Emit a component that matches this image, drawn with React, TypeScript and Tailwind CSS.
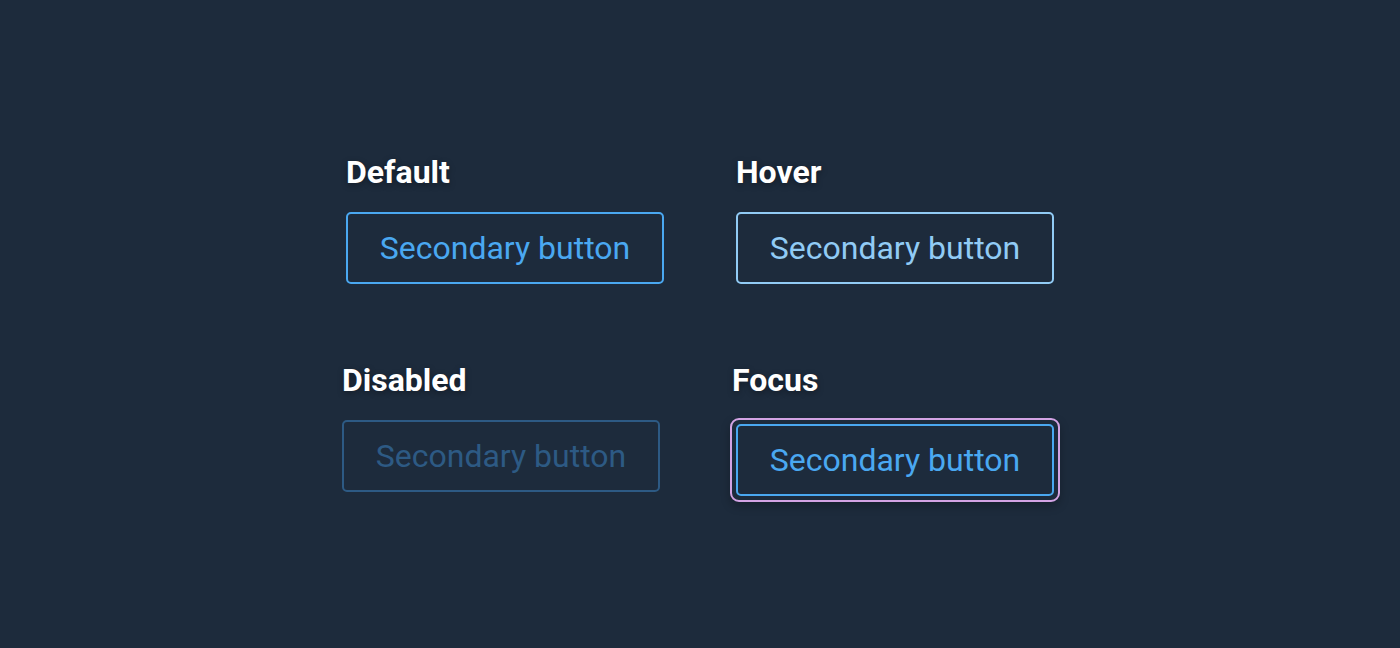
import React from "react";

const labelCls =
  "text-[32px] leading-[36px] font-bold text-white [text-shadow:0_2px_6px_rgba(0,0,0,0.35)]";
const btnBase =
  "w-[318px] h-[72px] rounded-[5px] border-2 bg-transparent text-[32px] leading-none flex items-center justify-center";

export default function App() {
  return (
    <div className="min-h-screen pt-[7px] bg-[#1d2b3c] flex items-center justify-center font-['Roboto',sans-serif]">
      <div className="grid grid-cols-[318px_318px] gap-x-[72px] gap-y-[78px]">
        <div className="flex flex-col gap-[22px]">
          <div className={labelCls}>Default</div>
          <button className={`${btnBase} border-[#4aa8f1] text-[#4aa8f1]`}>
            Secondary button
          </button>
        </div>
        <div className="flex flex-col gap-[22px]">
          <div className={labelCls}>Hover</div>
          <button className={`${btnBase} border-[#91cbf5] text-[#91cbf5]`}>
            Secondary button
          </button>
        </div>
        <div className="flex flex-col gap-[22px] -ml-1">
          <div className={labelCls}>Disabled</div>
          <button
            disabled
            className={`${btnBase} border-[#2d5a84] text-[#2d5a84]`}
          >
            Secondary button
          </button>
        </div>
        <div className="flex flex-col gap-[20px] -ml-1">
          <div className={labelCls}>Focus</div>
          <div className="-ml-[2px] w-[330px] rounded-[9px] border-2 border-[#d3a3e4] p-1 shadow-[0_4px_10px_rgba(0,0,0,0.25)]">
            <button className={`${btnBase} border-[#4aa8f1] text-[#4aa8f1]`}>
              Secondary button
            </button>
          </div>
        </div>
      </div>
    </div>
  );
}
